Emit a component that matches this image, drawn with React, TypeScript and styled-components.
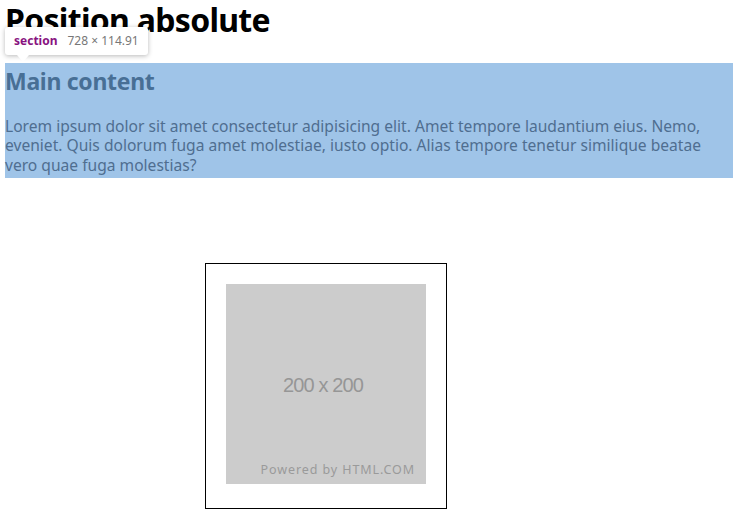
import React from "react";
import styled, { createGlobalStyle } from "styled-components";

const GlobalStyle = createGlobalStyle`
  html, body {
    margin: 0;
    padding: 0;
    background: #fff;
    overflow: hidden;
  }
  body {
    font-family: "Noto Sans", "Open Sans", sans-serif;
    color: #000;
  }
`;

const Page = styled.div`
  padding: 0 6px 0 5px;
  width: 728px;
`;

const Title = styled.h1`
  margin: -2px 0 0;
  font-size: 32px;
  line-height: 44px;
  font-weight: 700;
  letter-spacing: -0.7px;
`;

const Section = styled.section`
  position: relative;
  margin-top: 21px;
  height: 115px;
  background: #9fc4e8;
`;

const Heading = styled.h2`
  margin: 0;
  padding-top: 2px;
  font-size: 23px;
  line-height: 33px;
  font-weight: 700;
  letter-spacing: -0.3px;
  color: #486f95;
`;

const Text = styled.p`
  margin: 19px 0 0;
  font-size: 15.6px;
  line-height: 19.4px;
  color: #4f6e90;
`;

const Tooltip = styled.div`
  position: absolute;
  left: 0;
  top: -36px;
  display: flex;
  align-items: baseline;
  gap: 10px;
  padding: 0 9px;
  height: 28px;
  line-height: 28px;
  background: #fff;
  border-radius: 3px;
  box-shadow: 0 1px 5px rgba(0, 0, 0, 0.28);
  font-size: 12px;
  white-space: nowrap;

  &::after {
    content: "";
    position: absolute;
    left: 12px;
    bottom: -7px;
    border-left: 6px solid transparent;
    border-right: 6px solid transparent;
    border-top: 7px solid #fff;
  }
`;

const Tag = styled.span`
  color: #881280;
  font-weight: 700;
`;

const Size = styled.span`
  color: #777;
`;

const Frame = styled.div`
  width: fit-content;
  margin: 85px 0 0 200px;
  padding: 20px 20px 24px;
  border: 1px solid #000;
`;

const Placeholder = styled.div`
  position: relative;
  width: 200px;
  height: 200px;
  background: #ccc;
  display: flex;
  align-items: center;
  justify-content: center;
`;

const Label = styled.span`
  font-family: "Liberation Sans", Arial, sans-serif;
  font-size: 20px;
  letter-spacing: -0.9px;
  color: #969696;
  margin: 2px 6px 0 0;
`;

const Credit = styled.span`
  position: absolute;
  right: 11px;
  bottom: 6px;
  font-family: "Noto Sans", sans-serif;
  font-size: 12.5px;
  letter-spacing: 0.9px;
  color: #9a9a9a;
`;

export default function App() {
  return (
    <>
      <GlobalStyle />
      <Page>
        <Title>Position absolute</Title>
        <Section>
          <Tooltip>
            <Tag>section</Tag>
            <Size>728 × 114.91</Size>
          </Tooltip>
          <Heading>Main content</Heading>
          <Text>
            Lorem ipsum dolor sit amet consectetur adipisicing elit. Amet
            tempore laudantium eius. Nemo, eveniet. Quis dolorum fuga amet
            molestiae, iusto optio. Alias tempore tenetur similique beatae
            vero quae fuga molestias?
          </Text>
        </Section>
        <Frame>
          <Placeholder>
            <Label>200 x 200</Label>
            <Credit>Powered by HTML.COM</Credit>
          </Placeholder>
        </Frame>
      </Page>
    </>
  );
}
